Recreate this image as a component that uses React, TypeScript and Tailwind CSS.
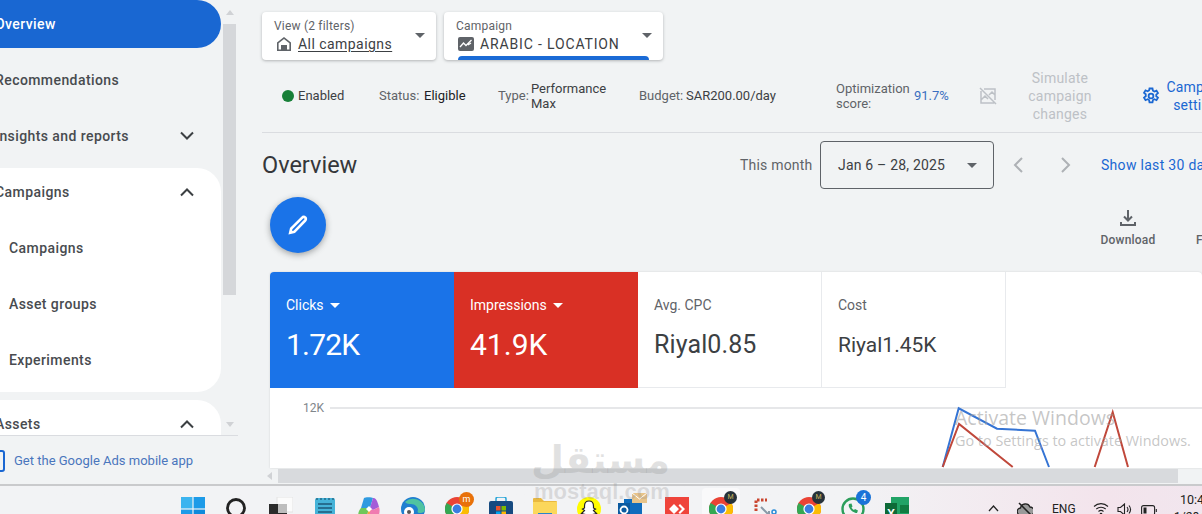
import React from "react";

const Caret = ({ className = "" }: { className?: string }) => (
  <svg width="10" height="5" viewBox="0 0 10 5" className={`shrink-0 ${className}`}><path d="M0 0h10L5 5z" fill="currentColor" /></svg>
);
const Chevron = ({ up = false }: { up?: boolean }) => (
  <svg width="16" height="10" viewBox="0 0 16 10" fill="none" stroke="#3c4043" strokeWidth="2"><path d={up ? "M2 8.500l6-6 6 6" : "M2 1.500l6 6 6-6"} /></svg>
);
const NavRow = ({ label, chevron, sub }: { label: string; chevron?: "up" | "down"; sub?: boolean }) => (
  <div className={`h-12 shrink-0 flex items-center justify-between pr-[26px] text-[14px] font-medium text-[#484b4f] tracking-[0.42px] ${sub ? "pl-[9px]" : "-ml-[5px]"}`}>
    <span>{label}</span>
    {chevron && <Chevron up={chevron === "up"} />}
  </div>
);

const TaskIcon = ({ children }: { children: React.ReactNode }) => (
  <div className="relative w-[44px] h-full flex justify-center pt-[11px] shrink-0">{children}</div>
);

const Chrome = () => (
  <svg width="24" height="24" viewBox="0 0 24 24">
    <circle cx="12" cy="12" r="12" fill="#ea4335" />
    <path d="M12 12L1.600 6A12 12 0 0 0 12 24z" fill="#34a853" />
    <path d="M12 12v12A12 12 0 0 0 22.400 6z" fill="#fbbc04" />
    <circle cx="12" cy="12" r="5.600" fill="#fff" />
    <circle cx="12" cy="12" r="4.400" fill="#3a7de0" />
  </svg>
);

export default function App() {
  return (
    <div className="relative w-[1202px] h-[514px] overflow-hidden bg-[#f1f3f4] font-['Roboto',sans-serif] flex flex-col">
      <div className="flex h-[484px] shrink-0">
        {/* Sidebar */}
        <aside className="w-[238px] shrink-0 flex flex-col relative">
          <div className="h-[435px] shrink-0 flex overflow-hidden border-b border-[#dadce0] box-content">
            <nav className="w-[221px] shrink-0 flex flex-col gap-2">
              <div className="h-12 shrink-0 bg-[#1967d2] rounded-r-[24px] flex items-center -ml-[5px] text-white text-[14px] font-medium tracking-[0.42px]">Overview</div>
              <NavRow label="Recommendations" />
              <NavRow label="Insights and reports" chevron="down" />
              <div className="bg-white rounded-r-[24px] pb-2 flex flex-col gap-2 shrink-0">
                <NavRow label="Campaigns" chevron="up" />
                <NavRow label="Campaigns" sub />
                <NavRow label="Asset groups" sub />
                <NavRow label="Experiments" sub />
              </div>
              <div className="bg-white rounded-tr-[24px] shrink-0 h-[60px]">
                <NavRow label="Assets" chevron="up" />
              </div>
            </nav>
            <div className="ml-[2px] w-[13px] shrink-0 flex flex-col items-center">
              <div className="h-6 shrink-0 flex items-center text-[#d0d2d5]">
                <svg width="8" height="5" viewBox="0 0 8 5"><path d="M4 0l4 5H0z" fill="currentColor" /></svg>
              </div>
              <div className="w-[13px] h-[271px] shrink-0 bg-[#d5d7da]" />
              <div className="mt-[127px] text-[#d0d2d5]">
                <svg width="8" height="5" viewBox="0 0 8 5"><path d="M0 0h8L4 5z" fill="currentColor" /></svg>
              </div>
            </div>
          </div>
          <div className="flex items-center gap-[9px] h-[48px] pt-[2px] shrink-0 -ml-[9px] text-[13px] text-[#4a76bd]">
            <div className="w-[14px] h-[22px] rounded-[3px] border-[2px] border-[#1a67d2] shrink-0" />
            <span className="whitespace-nowrap">Get the Google Ads mobile app</span>
          </div>
        </aside>

        {/* Main */}
        <main className="w-[964px] shrink-0 flex flex-col relative">
          <div className="pl-6 pt-3 flex gap-2 shrink-0">
            <div className="w-[174px] h-12 bg-white rounded shadow-[0_1px_3px_rgba(60,64,67,0.35)] flex items-center justify-between pl-3 pr-[11px]">
              <div className="flex flex-col">
                <span className="text-[12px] leading-[16px] text-[#5f6368] tracking-[0.2px]">View (2 filters)</span>
                <span className="ml-[2px] flex items-center gap-[6px] text-[14px] leading-[20px] text-[#3c4043] tracking-[0.45px]">
                  <svg width="16" height="16" viewBox="0 0 16 16" fill="#5f6368"><path d="M8 1L1 6.500V15h14V6.500zM8 3l5.400 4.200V13.500h-2.400V9H5v4.500H2.600V7.200z" /><rect x="6" y="10" width="4" height="5" /></svg>
                  <span className="underline underline-offset-2">All campaigns</span>
                </span>
              </div>
              <Caret className="text-[#5f6368] -mt-[1px]" />
            </div>
            <div className="relative w-[219px] h-12 bg-white rounded shadow-[0_1px_3px_rgba(60,64,67,0.35)] flex items-center justify-between pl-3 pr-[11px] overflow-hidden">
              <div className="flex flex-col">
                <span className="text-[12px] leading-[16px] text-[#5f6368] tracking-[0.2px]">Campaign</span>
                <span className="ml-[2px] flex items-center gap-[6px] text-[14px] leading-[20px] text-[#3c4043] tracking-[0.85px]">
                  <svg width="16" height="14" viewBox="0 0 16 14"><rect width="16" height="14" rx="2" fill="#5f6368" /><path d="M2 10l3.500-4 2.500 2.500L13.500 3M10 8l3-2" stroke="#fff" strokeWidth="1.300" fill="none" /></svg>
                  ARABIC - LOCATION
                </span>
              </div>
              <Caret className="text-[#5f6368] -mt-[1px]" />
              <div className="absolute left-[14px] bottom-0 w-[191px] h-1 bg-[#1a6bd6] rounded-t-[4px]" />
            </div>
          </div>

          <div className="ml-6 h-[73px] shrink-0 border-b border-[#dadce0] flex items-center text-[13px] tracking-[0px] text-[#5f6368] whitespace-nowrap">
            <span className="ml-5 w-[12px] h-[12px] rounded-full bg-[#188038] shrink-0" />
            <span className="ml-1 text-[#3c4043] w-[46px] shrink-0">Enabled</span>
            <span className="ml-[35px] w-[41px] shrink-0">Status:</span>
            <span className="ml-1 text-[#202124] w-[42px] shrink-0">Eligible</span>
            <span className="ml-8 w-[29px] shrink-0">Type:</span>
            <span className="ml-1 text-[#3c4043] leading-[15px] w-[80px] whitespace-normal shrink-0">Performance Max</span>
            <span className="ml-[28px] w-[43px] shrink-0">Budget:</span>
            <span className="ml-1 text-[#3c4043] w-[90px] shrink-0">SAR200.00/day</span>
            <span className="ml-[60px] leading-[15px] w-[78px] whitespace-normal shrink-0">Optimization score:</span>
            <span className="text-[#3a6fc0] w-[34px] shrink-0">91.7%</span>
            <svg className="ml-[31px] shrink-0" width="18" height="18" viewBox="0 0 18 18" fill="none" stroke="#bdc1c6" strokeWidth="1.500"><path d="M1 1l16 16M2 4v12h13M5 2h11v11M2 13l4-4 3 3M10 8l3-3 3 3" /></svg>
            <span className="ml-[23px] w-[80px] text-center text-[14px] leading-[18px] text-[#bdc1c6] whitespace-normal shrink-0 tracking-[0.2px]">Simulate campaign changes</span>
            <svg className="ml-[42px] shrink-0" width="18" height="18" viewBox="0 0 24 24" fill="none" stroke="#1a67d2" strokeWidth="2.400"><circle cx="12" cy="12" r="3.200" /><path d="M10 2h4l.6 3 2 1 2.700-1.200 2 3.400-2.300 1.900v2.200l2.300 1.900-2 3.400-2.700-1.200-2 1-.6 3h-4l-.6-3-2-1-2.700 1.200-2-3.400 2.300-1.900V9.700L2.700 7.800l2-3.400 2.700 1.200 2-1z" /></svg>
            <span className="ml-1 w-[70px] text-center text-[14px] leading-[18px] text-[#1a67d2] whitespace-normal shrink-0 tracking-[0.2px]">Campaign settings</span>
          </div>

          <div className="ml-6 mt-2 h-12 shrink-0 flex items-center whitespace-nowrap">
            <h1 className="pt-[2px] text-[23.500px] font-normal text-[#35373a] w-[478px] shrink-0">Overview</h1>
            <span className="text-[14px] text-[#5f6368] w-[80px] shrink-0 tracking-[0.2px]">This month</span>
            <div className="w-[174px] h-12 shrink-0 border border-[#5f6368] rounded flex items-center justify-between pl-[17px] pr-[16px] text-[14px] text-[#3c4043] tracking-[0.2px]">
              <span>Jan 6 – 28, 2025</span>
              <Caret className="text-[#5f6368]" />
            </div>
            <svg className="ml-[18px] shrink-0" width="12" height="18" viewBox="0 0 12 18" fill="none" stroke="#aeb1b5" strokeWidth="2"><path d="M10 2L3 9l7 7" /></svg>
            <svg className="ml-[36px] shrink-0" width="12" height="18" viewBox="0 0 12 18" fill="none" stroke="#aeb1b5" strokeWidth="2"><path d="M2 2l7 7-7 7" /></svg>
            <span className="ml-[29px] shrink-0 text-[14px] text-[#1a67d2] tracking-[0.3px]">Show last 30 days</span>
          </div>

          <div className="relative h-[83px] shrink-0 flex">
            <div className="ml-8 mt-2 w-14 h-14 shrink-0 rounded-full bg-[#1a73e8] shadow-[0_2px_6px_rgba(60,64,67,0.45)] flex items-center justify-center">
              <svg width="24" height="24" viewBox="0 0 20 20" fill="none" stroke="#fff" strokeWidth="2.200"><path d="M3.500 16.500l.8-3.500L13.500 3.800a1.700 1.700 0 0 1 2.500 0 1.700 1.700 0 0 1 0 2.500L6.900 15.700z" /></svg>
            </div>
            <div className="ml-[770px] mt-[20px] w-[64px] flex flex-col items-center shrink-0">
              <svg width="18" height="18" viewBox="0 0 18 18" fill="none" stroke="#5f6368" strokeWidth="2"><path d="M9 1v10M5 7.500l4 4 4-4M2 13v3h14v-3" /></svg>
              <span className="mt-[4px] text-[12px] font-medium text-[#5f6368] tracking-[0.2px]">Download</span>
            </div>
            <span className="ml-[36px] mt-[42px] shrink-0 text-[12px] font-medium text-[#5f6368]">Filters</span>
          </div>

          <div className="ml-8 flex-1 min-h-0 bg-white rounded-t overflow-hidden flex flex-col shadow-[0_0_2px_rgba(60,64,67,0.2)]">
            <div className="h-[116px] shrink-0 flex">
              <div className="w-[184px] shrink-0 bg-[#1a73e8] text-white pl-4 pt-[24px]">
                <div className="flex items-center gap-[6px] text-[14px] leading-[18px]">Clicks <Caret /></div>
                <div className="mt-[11px] text-[30px] leading-[40px] tracking-[-0.8px]">1.72K</div>
              </div>
              <div className="w-[184px] shrink-0 bg-[#d93025] text-white pl-4 pt-[24px]">
                <div className="flex items-center gap-[6px] text-[14px] leading-[18px]">Impressions <Caret /></div>
                <div className="mt-[11px] text-[30px] leading-[40px]">41.9K</div>
              </div>
              <div className="w-[184px] shrink-0 pl-4 pt-[24px] border-b border-r border-[#e8eaed]">
                <div className="text-[14px] leading-[18px] text-[#5f6368]">Avg. CPC</div>
                <div className="mt-[13px] text-[25px] leading-[36px] text-[#3c4043] tracking-[0.1px]">Riyal0.85</div>
              </div>
              <div className="w-[184px] shrink-0 pl-4 pt-[24px] border-b border-r border-[#e8eaed]">
                <div className="text-[14px] leading-[18px] text-[#5f6368]">Cost</div>
                <div className="mt-[13px] text-[21px] leading-[36px] text-[#3c4043]">Riyal1.45K</div>
              </div>
            </div>
            <div className="relative flex-1 min-h-0">
              <div className="flex items-center h-10 gap-[6px] pl-[33px]">
                <span className="text-[12px] text-[#80868b]">12K</span>
                <div className="flex-1 h-[2px] bg-[#e6e7e9]" />
              </div>
              <svg className="absolute left-0 top-0" width="932" height="80" viewBox="270 388 932 80" fill="none" strokeWidth="2">
                <polyline points="942.700,467 958.700,408.300 997,428.700 1035,430.700 1049,467" stroke="#3574d4" />
                <polyline points="942.700,467 959,424 1012.700,467" stroke="#c0483b" />
                <polyline points="1094.700,467 1112.700,412.300 1128,467" stroke="#c0483b" />
              </svg>
            </div>
          </div>

          {/* horizontal scrollbar */}
          <div className="h-[16px] shrink-0 flex items-start pl-[29px] pt-px">
            <svg className="mt-[3px]" width="5" height="8" viewBox="0 0 5 8"><path d="M5 0v8L0 4z" fill="#d0d2d5" /></svg>
            <div className="ml-[6px] w-[900px] h-[14px] bg-[#d8dadd]" />
          </div>
        </main>
      </div>

      {/* Taskbar */}
      <footer className="relative h-[30px] shrink-0 border-t-2 border-[#c9cacc] bg-gradient-to-r from-[#f2f3f5] from-70% via-[#f3e4ec] via-92% to-[#f1e6ee] flex pl-[171px] overflow-hidden">
        <TaskIcon>
          <svg width="24" height="24" viewBox="0 0 24 24"><rect width="11.400" height="11.400" fill="#3bb4ef" /><rect x="12.600" width="11.400" height="11.400" fill="#1d9be8" /><rect y="12.600" width="11.400" height="11.400" fill="#1d9be8" /><rect x="12.600" y="12.600" width="11.400" height="11.400" fill="#0f8bdc" /></svg>
        </TaskIcon>
        <TaskIcon>
          <svg width="24" height="24" viewBox="0 0 24 24" fill="none" stroke="#222" strokeWidth="2.800"><circle cx="11" cy="11" r="8.500" /><path d="M17 17l6 6" /></svg>
        </TaskIcon>
        <TaskIcon>
          <svg width="24" height="24" viewBox="0 0 24 24"><rect x="8" y="0" width="16" height="15" fill="#fbfbfb" stroke="#e3e3e3" /><rect x="0" y="7" width="18" height="17" fill="#2b2b2b" /><rect x="9" y="7" width="9" height="9" fill="#bdbdbd" /></svg>
        </TaskIcon>
        <TaskIcon>
          <svg width="20" height="24" viewBox="0 0 20 24"><rect y="1" width="20" height="23" rx="2" fill="#45b3d8" /><path d="M3 7h14M3 11h14M3 15h14M3 19h14" stroke="#1c5a78" strokeWidth="1.300" /><path d="M2 1v2M6 1v2M10 1v2M14 1v2M18 1v2" stroke="#1c5a78" strokeWidth="1.200" /></svg>
        </TaskIcon>
        <TaskIcon>
          <svg width="22" height="24" viewBox="0 0 22 24"><path d="M6 1c1-1 8-1 9 0l-3 10H3z" fill="#2f9ae0" /><path d="M15 1c3 0 4 2 6 9l-6 3-3-2z" fill="#a45cd8" /><path d="M3 11h8l-3 12H2C0 21-1 15 3 11z" fill="#6fc85a" /><path d="M11 11l4 2 6-3c2 5-1 13-5 13H8z" fill="#f07bb0" /><path d="M8 23l3-12h2l-3 12z" fill="#f4b03a" /><path d="M11 9l3 3-3 3-3-3z" fill="#fff" /></svg>
        </TaskIcon>
        <TaskIcon>
          <svg width="24" height="24" viewBox="0 0 24 24"><circle cx="12" cy="12" r="12" fill="#1f7fd0" /><path d="M4 5a12 12 0 0 1 20 7c0 3-2 4-5 4-2 0-3-1-2-3 0-3-3-6-7-6-2 0-4 0-6-2z" fill="#4fc3a1" /><circle cx="8" cy="15" r="5" fill="#fff" /><circle cx="8" cy="15" r="2" fill="#555" /></svg>
        </TaskIcon>
        <TaskIcon>
          <div className="relative"><Chrome /><span className="absolute -top-[5px] -right-[5px] w-[15px] h-[15px] rounded-full bg-[#e8710a] text-white text-[9px] leading-[15px] text-center">m</span></div>
        </TaskIcon>
        <TaskIcon>
          <svg width="24" height="24" viewBox="0 0 24 24"><path d="M7 4V2a2 2 0 0 1 2-2h6a2 2 0 0 1 2 2v2" fill="none" stroke="#2aa6d8" strokeWidth="1.500" /><rect y="4" width="24" height="20" rx="2" fill="#164a80" /><rect x="7" y="9" width="4.500" height="4.500" fill="#e8542f" /><rect x="12.500" y="9" width="4.500" height="4.500" fill="#7fba00" /><rect x="7" y="14.500" width="4.500" height="4.500" fill="#00a4ef" /><rect x="12.500" y="14.500" width="4.500" height="4.500" fill="#ffb900" /></svg>
        </TaskIcon>
        <TaskIcon>
          <svg width="24" height="24" viewBox="0 0 24 24"><path d="M0 2a1 1 0 0 1 1-1h7l3 3h12a1 1 0 0 1 1 1v18H0z" fill="#e9b93f" /><rect y="5" width="24" height="19" fill="#fbd75b" /><rect x="5" y="16" width="14" height="8" fill="#2a86c8" /></svg>
        </TaskIcon>
        <TaskIcon>
          <svg width="24" height="24" viewBox="0 0 24 24"><circle cx="12" cy="12" r="12" fill="#fffc00" /><path d="M12 4c3 0 4.500 2 4.500 5v2l2 1-2 1.500 3 3-4 1-3.500 2-3.500-2-4-1 3-3L5.500 12l2-1V9c0-3 1.500-5 4.500-5z" fill="#fff" stroke="#222" strokeWidth="1.200" /></svg>
        </TaskIcon>
        <TaskIcon>
          <svg width="30" height="24" viewBox="0 0 30 24" className="-mt-[4px]"><rect x="6" y="6" width="18" height="18" fill="#0f6cbd" /><rect x="0" y="10" width="12" height="14" fill="#0a5aa0" /><circle cx="6" cy="17" r="3.500" fill="none" stroke="#fff" strokeWidth="1.800" /><rect x="14" y="0" width="15" height="10" fill="#e8c48a" /><path d="M14 0l7.500 6L29 0" fill="none" stroke="#fff" strokeWidth="1" /></svg>
        </TaskIcon>
        <TaskIcon>
          <svg width="24" height="24" viewBox="0 0 24 24"><rect width="24" height="24" fill="#ef443b" /><path d="M9 7l5 5-5 5-5-5zM15 7l5 5-5 5-1.500-1.500L17 12l-3.500-3.500z" fill="#fff" /></svg>
        </TaskIcon>
        <TaskIcon>
          <div className="absolute top-[2px] left-[3px] w-[38px] h-[30px] bg-[#f9f9fa] rounded-t" />
          <div className="relative"><Chrome /><span className="absolute -top-[6px] -right-[4px] w-[13px] h-[13px] rounded-full bg-[#27323a] text-[#c9b45a] text-[7px] leading-[13px] text-center">M</span></div>
        </TaskIcon>
        <TaskIcon>
          <svg width="24" height="24" viewBox="0 0 24 24" fill="none"><path d="M3 14V3h11" stroke="#c9452e" strokeWidth="3" strokeDasharray="2.500 1.500" /><path d="M8 10l8 8M16 14v10" stroke="#8a9aa8" strokeWidth="2" /><circle cx="21" cy="15" r="2" stroke="#2a8cd8" strokeWidth="1.500" /></svg>
        </TaskIcon>
        <TaskIcon>
          <div className="relative"><Chrome /><span className="absolute -top-[6px] -right-[4px] w-[13px] h-[13px] rounded-full bg-[#27323a] text-[#c9b45a] text-[7px] leading-[13px] text-center">M</span></div>
        </TaskIcon>
        <TaskIcon>
          <div className="relative">
            <svg width="24" height="24" viewBox="0 0 24 24" fill="none"><circle cx="12" cy="12" r="10.500" stroke="#2b9e5b" strokeWidth="2.400" /><path d="M8 7c-1.500 3 3 9 8 9l1-2.500-3-1.500-1 1c-1-.5-2-1.500-2.500-2.500l1-1-1-3z" fill="#2b9e5b" /></svg>
            <span className="absolute -top-[7px] -right-[6px] w-[15px] h-[15px] rounded-full bg-[#1a73d8] text-white text-[10px] leading-[15px] text-center">4</span>
          </div>
        </TaskIcon>
        <TaskIcon>
          <svg width="24" height="24" viewBox="0 0 24 24"><rect x="6" width="18" height="24" fill="#21a366" /><rect x="15" y="8" width="9" height="8" fill="#107c41" /><rect y="6" width="12" height="18" fill="#0e6a38" /><text x="6" y="21" textAnchor="middle" fill="#fff" fontSize="12" fontWeight="700" fontFamily="Liberation Sans, sans-serif">X</text></svg>
        </TaskIcon>

        <div className="absolute inset-0 pointer-events-none text-[#222]">
          <svg className="absolute left-[988px] top-[19px]" width="11" height="7" viewBox="0 0 11 7" fill="none" stroke="#222" strokeWidth="1.300"><path d="M1 6l4.500-5L10 6" /></svg>
          <svg className="absolute left-[1017px] top-[16px]" width="16" height="14" viewBox="0 0 16 14" fill="#9a9a9a" stroke="#222" strokeWidth="1.300"><path d="M4 13a3.500 3.500 0 0 1-.5-7A5 5 0 0 1 13 5a3.500 3.500 0 0 1 0 8z" /><path d="M2 1l12 12" strokeWidth="1.500" /></svg>
          <span className="absolute left-[1052px] top-[16px] text-[12px] leading-[14px]">ENG</span>
          <svg className="absolute left-[1093px] top-[16px]" width="16" height="13" viewBox="0 0 16 13" fill="none" stroke="#222" strokeWidth="1.100"><path d="M1 4.500a10 10 0 0 1 14 0M3.300 7a7 7 0 0 1 9.400 0M5.500 9.500a3.700 3.700 0 0 1 5 0" /><circle cx="8" cy="12" r="0.800" fill="#222" /></svg>
          <svg className="absolute left-[1117px] top-[17px]" width="16" height="13" viewBox="0 0 16 13" fill="none" stroke="#222" strokeWidth="1.100"><path d="M1 4.500h2.500L7.500 1v11L3.500 8.500H1zM10 4a4 4 0 0 1 0 5M12 2.500a6.500 6.500 0 0 1 0 8" /></svg>
          <svg className="absolute left-[1141px] top-[19px]" width="16" height="11" viewBox="0 0 16 11" fill="none" stroke="#222" strokeWidth="1.100"><rect x="0.600" y="0.600" width="13" height="9.500" rx="2" /><rect x="2.500" y="2.500" width="3" height="6" fill="#222" stroke="none" /><path d="M15.300 4v3" /></svg>
          <span className="absolute left-[1180px] top-[7px] text-[12.500px] leading-[14px] whitespace-nowrap">10:41</span>
          <span className="absolute left-[1174px] top-[24px] text-[12px] leading-[14px] whitespace-nowrap">1/28/2025</span>
        </div>
      </footer>

      {/* Overlays */}
      <div className="absolute left-[955px] top-[406px] text-[19.500px] leading-[24px] text-[#a0a0a0]/60 font-['Open_Sans',sans-serif] pointer-events-none whitespace-nowrap">Activate Windows</div>
      <div className="absolute left-[955px] top-[432px] text-[14.400px] leading-[18px] text-[#a0a0a0]/60 font-['Open_Sans',sans-serif] pointer-events-none whitespace-nowrap">Go to Settings to activate Windows.</div>
      <div dir="rtl" className="absolute left-[536px] top-[432px] w-[134px] text-center text-[38px] leading-[56px] font-bold text-[#8a8a8a]/25 font-['DejaVu_Sans',sans-serif] pointer-events-none">مستقل</div>
      <div className="absolute left-[534px] top-[482px] w-[134px] text-center text-[22px] leading-[20px] font-bold text-[#8a8a8a]/25 font-['Liberation_Sans',sans-serif] pointer-events-none whitespace-nowrap">mostaql.com</div>
    </div>
  );
}
